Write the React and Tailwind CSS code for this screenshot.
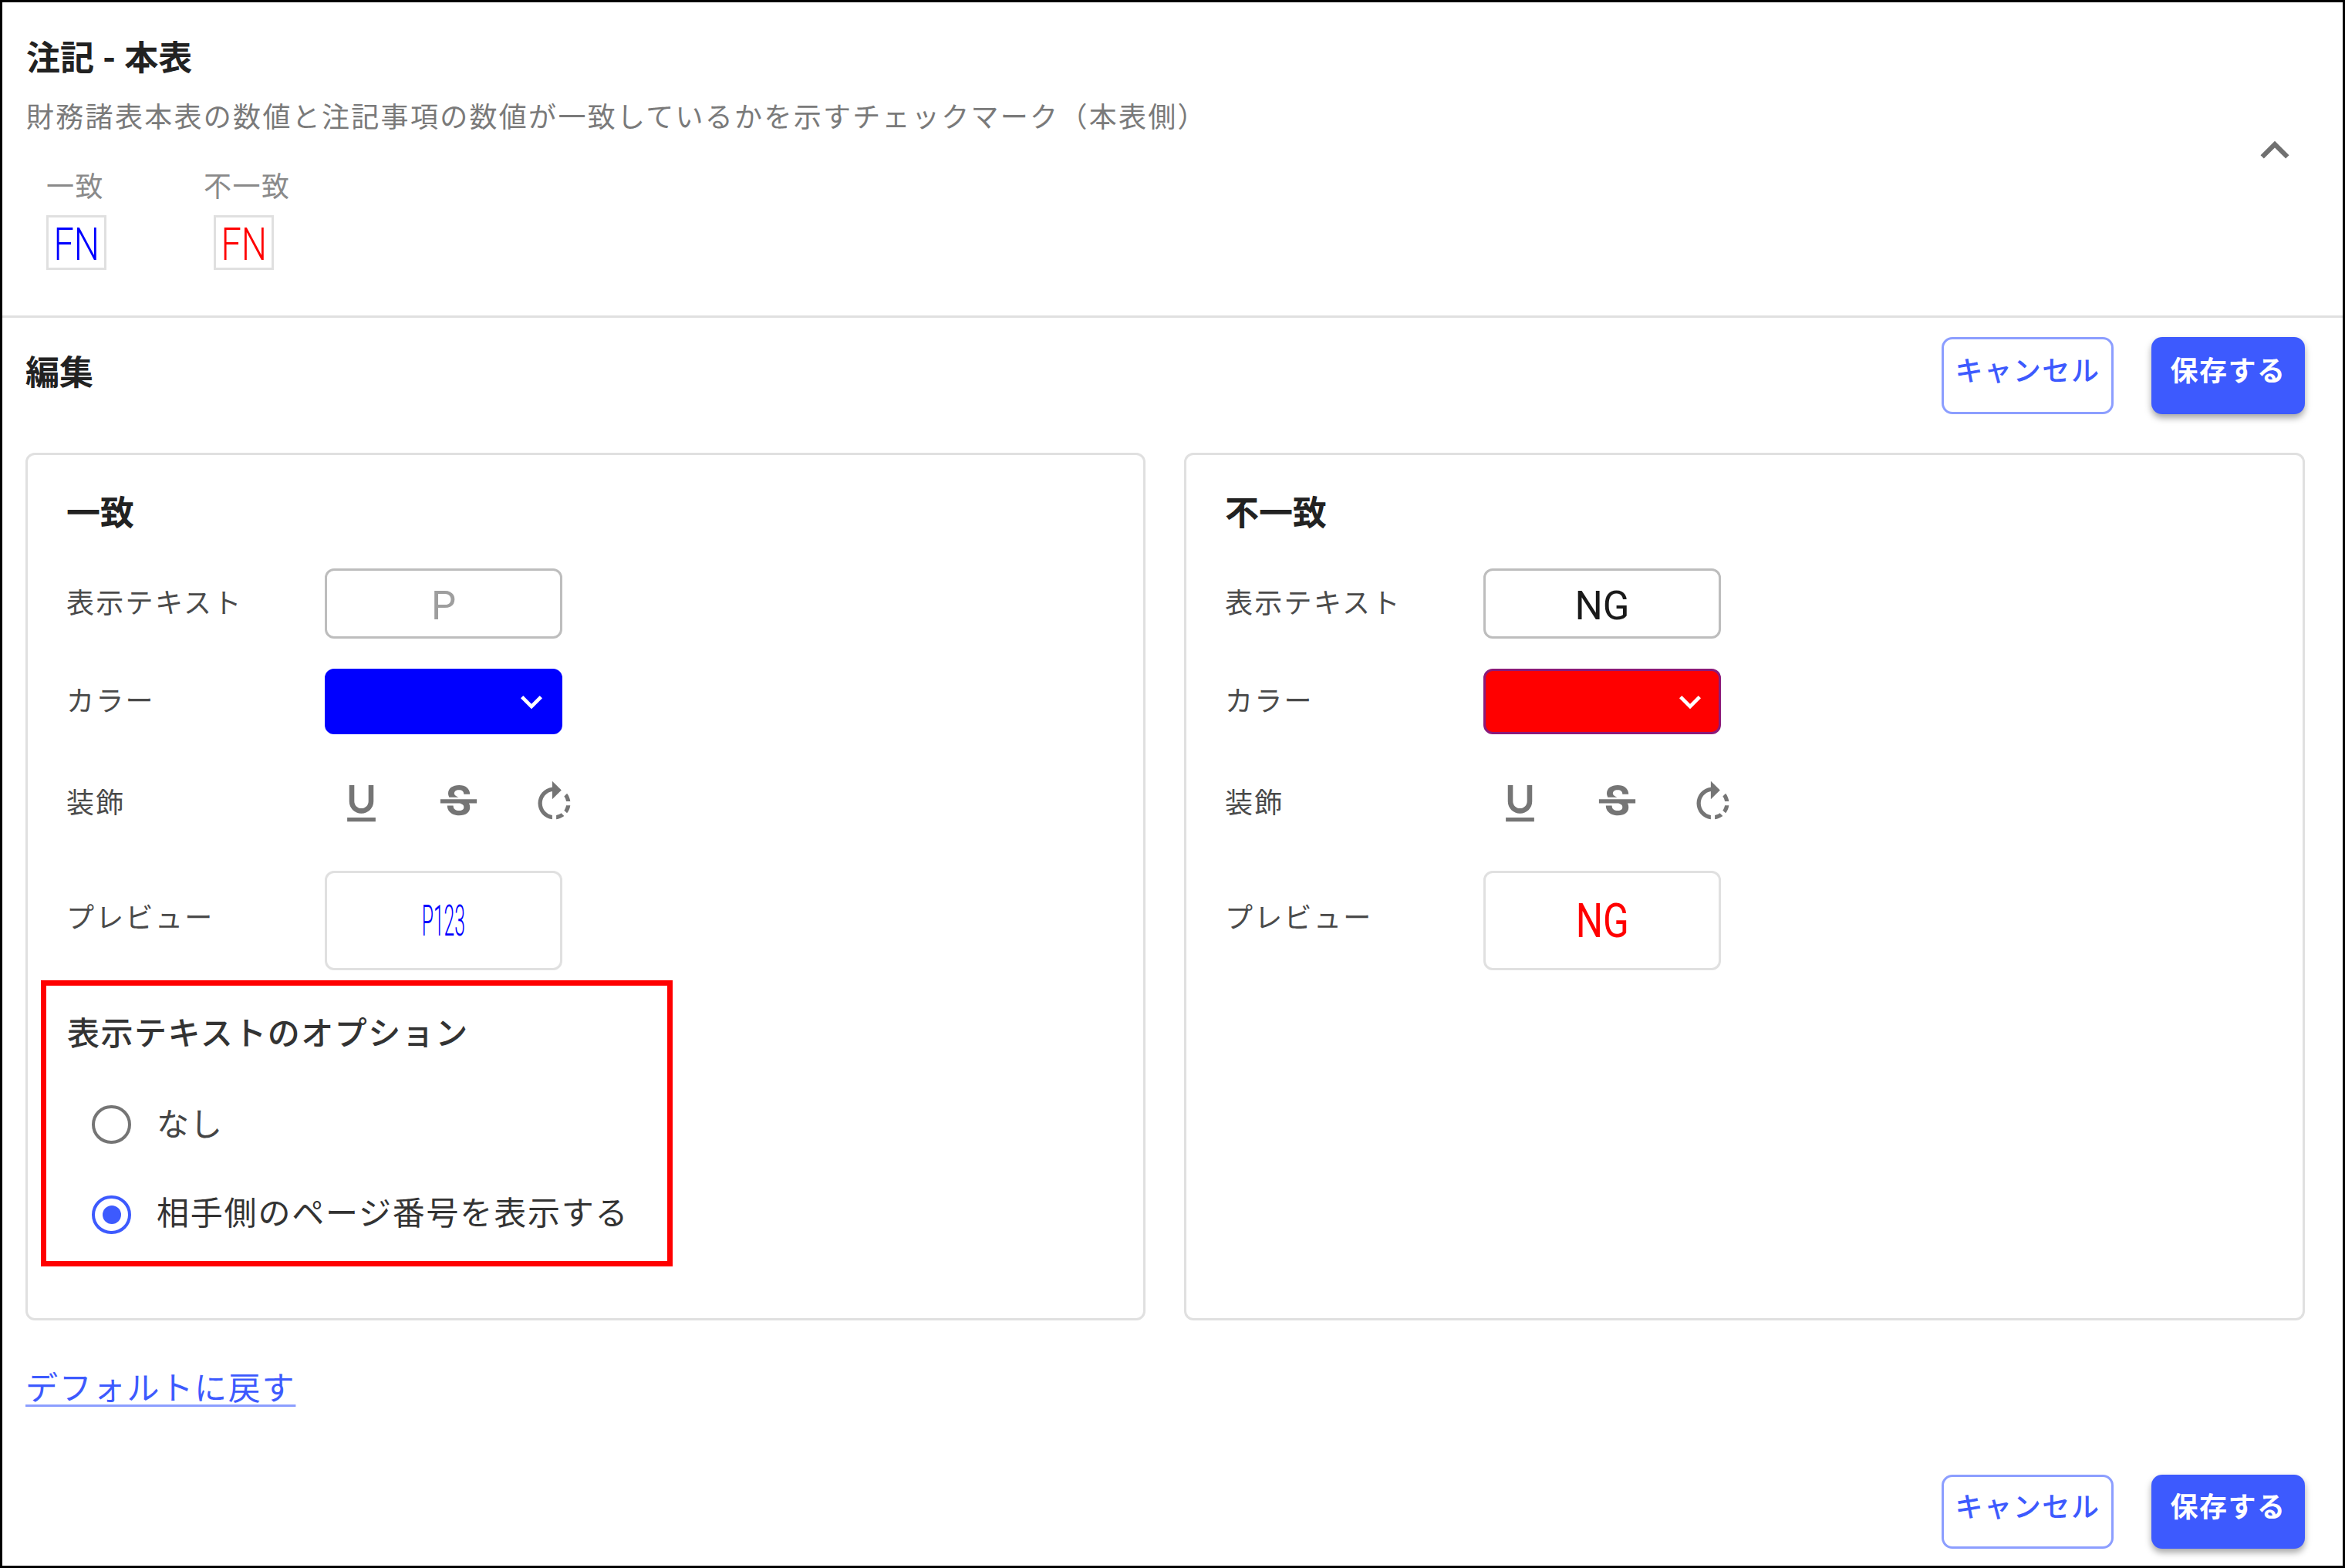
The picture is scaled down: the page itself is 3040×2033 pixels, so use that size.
const font = { fontFamily: '"Roboto", "Noto Sans CJK JP", sans-serif' };

function Ico({ d, className = "" }) {
  return (
    <svg viewBox="0 0 24 24" className={className} fill="currentColor">
      <path d={d} />
    </svg>
  );
}

const UNDER = "M12 17c3.31 0 6-2.69 6-6V3h-2.5v8c0 1.93-1.57 3.5-3.5 3.5S8.5 12.93 8.5 11V3H6v8c0 3.31 2.69 6 6 6zm-7 2v2h14v-2H5z";
const STRIKE = "M7.24 8.75c-.26-.48-.39-1.03-.39-1.67 0-.61.13-1.16.4-1.67.26-.5.63-.93 1.11-1.29.48-.35 1.05-.63 1.7-.83.66-.19 1.39-.29 2.18-.29.81 0 1.54.11 2.21.34.66.22 1.23.54 1.69.94.47.4.83.88 1.08 1.43.25.55.38 1.15.38 1.81h-3.01c0-.31-.05-.59-.15-.85-.09-.27-.24-.49-.44-.68-.2-.19-.45-.33-.75-.44-.3-.1-.66-.16-1.06-.16-.39 0-.74.04-1.03.13-.29.09-.53.21-.72.36-.19.16-.34.34-.44.55-.1.21-.15.43-.15.66 0 .48.25.88.74 1.21.38.25.77.48 1.41.7H7.39c-.05-.08-.11-.17-.15-.25zM21 12v-2H3v2h9.62c.18.07.4.14.55.2.37.17.66.34.87.51.21.17.35.36.43.57.07.2.11.43.11.69 0 .23-.05.45-.14.66-.09.2-.23.38-.42.53-.19.15-.42.26-.71.35-.29.08-.63.13-1.01.13-.43 0-.83-.04-1.18-.13s-.66-.23-.91-.42c-.25-.19-.45-.44-.59-.75-.14-.31-.25-.76-.25-1.21H6.4c0 .55.08 1.13.24 1.58.16.45.37.85.65 1.21.28.35.6.66.98.92.37.26.78.48 1.22.65.44.17.9.3 1.38.39.48.08.96.13 1.44.13.8 0 1.53-.09 2.18-.28s1.21-.45 1.67-.79c.46-.34.82-.77 1.07-1.27s.38-1.07.38-1.71c0-.6-.1-1.14-.31-1.61-.05-.11-.11-.23-.17-.33H21z";
const ROTATE = "M15.55 5.55 11 1v3.07C7.06 4.56 4 7.92 4 12s3.05 7.44 7 7.93v-2.02c-2.84-.48-5-2.94-5-5.91s2.16-5.43 5-5.91V10l4.55-4.45zM19.93 11c-.17-1.39-.72-2.73-1.62-3.89l-1.42 1.42c.54.75.88 1.6 1.02 2.47h2.02zM13 17.9v2.02c1.39-.17 2.74-.71 3.9-1.61l-1.44-1.44c-.75.54-1.59.89-2.46 1.03zm3.89-2.42 1.42 1.41c.9-1.16 1.45-2.5 1.62-3.89h-2.02c-.14.87-.48 1.72-1.02 2.48z";

function Buttons({ h }) {
  return (
    <div className={`flex gap-[49px] ${h}`}>
      <div className="w-[223px] h-full rounded-[14px] border-[3px] border-[#8c9eff] bg-white text-[#3d5afe] text-[36px] tracking-[1.6px] font-medium flex items-center justify-center pb-[10px]">
        キャンセル
      </div>
      <div className="w-[199px] h-full rounded-[14px] bg-[#3d5afe] text-white text-[36px] tracking-[1.5px] font-bold flex items-center justify-center pb-[10px] shadow-[0_5px_8px_rgba(0,0,0,0.35)]">
        保存する
      </div>
    </div>
  );
}

function Label({ children }) {
  return <div className="w-[335px] shrink-0 text-[36px] tracking-[2.3px] leading-[44px] text-[#4a4a4a]">{children}</div>;
}

function Card({ title, inputText, inputClass, selectClass, previewClass, preview, children }) {
  return (
    <div className="h-[1125px] rounded-[12px] border-[3px] border-[#e0e0e0] pl-[50px] pt-[53px]">
      <div className="text-[44px] leading-[46px] font-bold text-[#222]">{title}</div>
      <div className="flex items-center mt-[48px] h-[91px]">
        <Label>表示テキスト</Label>
        <div className={`w-[308px] h-full rounded-[12px] border-[3px] border-[#bdbdbd] flex items-center justify-center text-[51px] pt-[8px] ${inputClass}`}>
          {inputText}
        </div>
      </div>
      <div className="flex items-center mt-[39px] h-[85px]">
        <Label>カラー</Label>
        <div className={`w-[308px] h-full rounded-[12px] border-[3px] flex items-center justify-end pr-[9px] text-white ${selectClass}`}>
          <Ico d="M7.41 8.59 12 13.17l4.59-4.58L18 10l-6 6-6-6 1.41-1.41z" className="w-[56px] h-[56px]" />
        </div>
      </div>
      <div className="flex items-center mt-[58px] h-[63px]">
        <Label>装飾</Label>
        <div className="flex items-center ml-[16px] text-[#757575]">
          <Ico d={UNDER} className="w-[63px] h-[63px]" />
          <Ico d={STRIKE} className="w-[63px] h-[63px] ml-[63px]" />
          <Ico d={ROTATE} className="w-[63px] h-[63px] ml-[61px]" />
        </div>
      </div>
      <div className="flex items-center mt-[56px] h-[129px]">
        <div className="w-[335px] shrink-0 text-[36px] tracking-[2.3px] leading-[44px] text-[#4a4a4a] pb-[6px]">プレビュー</div>
        <div className="w-[308px] h-full rounded-[12px] border-[3px] border-[#e0e0e0] flex items-center justify-center">
          <span className={previewClass}>{preview}</span>
        </div>
      </div>
      {children}
    </div>
  );
}

function Radio({ checked }) {
  return (
    <div className={`w-[51px] h-[50px] rounded-full border-[4px] flex items-center justify-center shrink-0 ${checked ? "border-[#3d5afe]" : "border-[#757575]"}`}>
      {checked && <div className="w-[24px] h-[24px] rounded-full bg-[#3d5afe]" />}
    </div>
  );
}

export default function App() {
  return (
    <div style={font} className="w-[3040px] h-[2033px] border-[3px] border-black bg-white flex flex-col">
      <div className="h-[409px] shrink-0 border-b-[3px] border-[#e0e0e0] flex justify-between pl-[31px] pr-[51px]">
        <div className="pt-[50px]">
          <div className="text-[44px] leading-[46px] font-bold text-[#222]">注記 - 本表</div>
          <div className="mt-[30px] text-[36px] leading-[48px] tracking-[2.3px] text-[#7a7a7a]">
            財務諸表本表の数値と注記事項の数値が一致しているかを示すチェックマーク（本表側）
          </div>
          <div className="flex gap-[126px] ml-[23px] mt-[44px]">
            <div className="flex flex-col items-center">
              <div className="text-[36px] leading-[44px] tracking-[1.5px] text-[#8a8a8a]">一致</div>
              <div className="mt-[14px] ml-[3px] w-[78px] h-[71px] border-[3px] border-[#e0e0e0] flex items-center justify-center text-[60px] font-light leading-none pt-[4px] text-[#0000ff]">
                <span className="scale-x-[0.78]">FN</span>
              </div>
            </div>
            <div className="flex flex-col items-center">
              <div className="text-[36px] leading-[44px] tracking-[1.5px] text-[#8a8a8a]">不一致</div>
              <div className="mt-[14px] mr-[8px] w-[78px] h-[71px] border-[3px] border-[#e0e0e0] flex items-center justify-center text-[60px] font-light leading-none pt-[4px] text-[#ff0000]">
                <span className="scale-x-[0.78]">FN</span>
              </div>
            </div>
          </div>
        </div>
        <div className="pt-[155px]">
          <Ico d="M12 8l-6 6 1.41 1.41L12 10.83l4.59 4.58L18 14z" className="w-[74px] h-[74px] text-[#707070]" />
        </div>
      </div>

      <div className="flex flex-col flex-1 pl-[30px] pr-[49px]">
        <div className="flex justify-between items-center mt-[25px] h-[100px]">
          <div className="text-[44px] leading-[46px] font-bold text-[#222] pb-[6px]">編集</div>
          <Buttons h="h-[100px]" />
        </div>

        <div className="grid grid-cols-[1452px_1453px] gap-[50px] mt-[50px]">
          <Card
            title="一致"
            inputText="P"
            inputClass="text-[#9e9e9e]"
            selectClass="bg-[#0000ff] border-[#0000ff]"
            previewClass="text-[56px] font-light leading-none text-[#0000ff] scale-x-[0.44]"
            preview="P123"
          >
            <div className="-ml-[33px] mt-[13px] w-[819px] h-[371px] border-[7px] border-[#ff0000] pl-[27px] pt-[39px]">
              <div className="text-[42px] leading-[48px] font-medium tracking-[1.5px] text-[#333]">表示テキストのオプション</div>
              <div className="flex items-center ml-[32px] mt-[68px] h-[50px]">
                <Radio />
                <div className="ml-[33px] text-[42px] tracking-[1px] text-[#444]">なし</div>
              </div>
              <div className="flex items-center ml-[32px] mt-[67px] h-[50px]">
                <Radio checked />
                <div className="ml-[33px] text-[42px] tracking-[1.8px] pb-[3px] text-[#333]">相手側のページ番号を表示する</div>
              </div>
            </div>
          </Card>
          <Card
            title="不一致"
            inputText="NG"
            inputClass="text-[#1a1a1a]"
            selectClass="bg-[#ff0000] border-[#8b1a7a]"
            previewClass="text-[62px] leading-none text-[#ff0000] scale-x-[0.8]"
            preview="NG"
          />
        </div>

        <div className="mt-[67px] h-[44px] text-[42px] leading-[44px] tracking-[1.8px] text-[#3d5afe] underline decoration-[#8c9eff] decoration-[3px] underline-offset-[6px]">
          デフォルトに戻す
        </div>

        <div className="mt-auto mb-[22px] flex justify-end">
          <Buttons h="h-[96px]" />
        </div>
      </div>
    </div>
  );
}
